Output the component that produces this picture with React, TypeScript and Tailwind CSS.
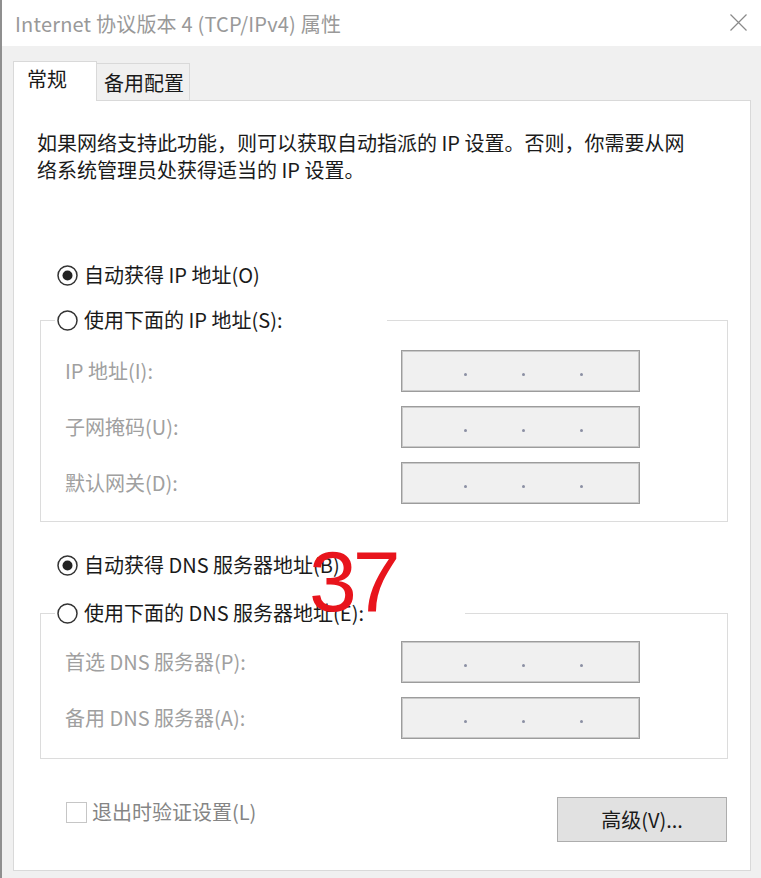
import React from 'react';

const Radio: React.FC<{ checked?: boolean }> = ({ checked }) => (
  <svg width="21" height="21" viewBox="0 0 21 21" className="shrink-0">
    <circle cx="10.5" cy="10.5" r="9.5" fill="#fff" stroke="#333" strokeWidth="1.5" />
    {checked && <circle cx="10.5" cy="10.5" r="5" fill="#222" />}
  </svg>
);

const IpField: React.FC = () => (
  <div className="w-[239px] h-[42px] border border-[#9c9c9c] shadow-[inset_0_0_0_1px_#c9c9c9] bg-[#f0f0f0] flex items-center justify-center gap-[55px] pl-[6px] pt-[6px]">
    {[0, 1, 2].map((i) => (
      <span key={i} className="w-[3px] h-[3px] rounded-full bg-[#8b8fa3]" />
    ))}
  </div>
);

const FieldRow: React.FC<{ label: string }> = ({ label }) => (
  <div className="flex items-center h-[42px]">
    <span className="w-[336px] text-[#a0a0a0] -mt-[2px]">{label}</span>
    <IpField />
  </div>
);

const App: React.FC = () => {
  return (
    <div className="w-[761px] h-[878px] bg-[#f0f0f0] border-l-2 border-[#8f8f8f] flex flex-col overflow-hidden relative text-[20px] leading-[27px] text-[#1a1a1a] font-['Noto_Sans_CJK_SC',sans-serif]">
      {/* Title bar */}
      <div className="h-[46px] bg-white flex items-center justify-between pl-[13px] pr-[14px] shrink-0">
        <span className="text-[#999] tracking-[0.2px]">Internet 协议版本 4 (TCP/IPv4) 属性</span>
        <svg width="17" height="17" viewBox="0 0 17 17" className="-mt-[2px]">
          <path d="M0.5 0.5 L16.5 16.5 M16.5 0.5 L0.5 16.5" stroke="#8a8a8a" strokeWidth="1.2" />
        </svg>
      </div>

      <div className="pl-[11px] pt-[15px]">
        {/* Tabs */}
        <div className="flex items-end h-[39px]">
          <div className="w-[84px] h-[40px] -mb-px bg-white border border-b-0 border-[#d9d9d9] relative z-10 pl-[13px] pt-[3px]">
            常规
          </div>
          <div className="w-[93px] h-[37px] bg-[#f0f0f0] border border-l-0 border-b-0 border-[#d9d9d9] pl-[7px] pt-[5px]">
            备用配置
          </div>
        </div>

        {/* Panel */}
        <div className="w-[738px] h-[771px] bg-white border border-[#d9d9d9] flex flex-col">
          <p className="pl-[23px] pt-[28px] whitespace-nowrap">
            如果网络支持此功能，则可以获取自动指派的 IP 设置。否则，你需要从网
            <br />
            络系统管理员处获得适当的 IP 设置。
          </p>

          <label className="flex items-center gap-[6px] h-[24px] ml-[43px] mt-[80px]">
            <Radio checked />
            <span className="-mt-[2px]">自动获得 IP 地址(O)</span>
          </label>

          <fieldset className="ml-[26px] w-[688px] mt-[21px] border border-[#dcdcdc] pl-[24px] pt-[18px] pb-[17px] flex flex-col gap-[14px]">
            <legend className="-ml-[10px] w-[332px] h-[24px] pl-[2px] flex items-center gap-[6px]">
              <Radio />
              <span className="-mt-[2px]">使用下面的 IP 地址(S):</span>
            </legend>
            <FieldRow label="IP 地址(I):" />
            <FieldRow label="子网掩码(U):" />
            <FieldRow label="默认网关(D):" />
          </fieldset>

          <label className="flex items-center gap-[6px] h-[24px] ml-[43px] mt-[31px]">
            <Radio checked />
            <span className="-mt-[2px]">自动获得 DNS 服务器地址(B)</span>
          </label>

          <fieldset className="ml-[26px] w-[688px] mt-[24px] border border-[#dcdcdc] pl-[24px] pt-[16px] pb-[19px] flex flex-col gap-[14px]">
            <legend className="-ml-[10px] w-[410px] h-[24px] pl-[2px] flex items-center gap-[6px]">
              <Radio />
              <span className="-mt-[2px]">使用下面的 DNS 服务器地址(E):</span>
            </legend>
            <FieldRow label="首选 DNS 服务器(P):" />
            <FieldRow label="备用 DNS 服务器(A):" />
          </fieldset>

          <div className="flex items-start justify-between mt-[38px] pl-[52px] pr-[23px]">
            <label className="flex items-center gap-[5px] mt-[3px]">
              <span className="w-[21px] h-[21px] border border-[#c6c6c6] bg-white" />
              <span className="text-[#858585] -mt-[2px]">退出时验证设置(L)</span>
            </label>
            <button className="w-[170px] h-[45px] bg-[#e1e1e1] border border-[#adadad] text-[#1a1a1a]">
              高级(V)...
            </button>
          </div>
        </div>
      </div>

      {/* Red overlay number */}
      <span className="absolute left-[307px] top-[538px] text-[86px] leading-none tracking-[-4px] text-[#e8141c] font-['Liberation_Sans',sans-serif]">
        37
      </span>
    </div>
  );
};

export default App;
